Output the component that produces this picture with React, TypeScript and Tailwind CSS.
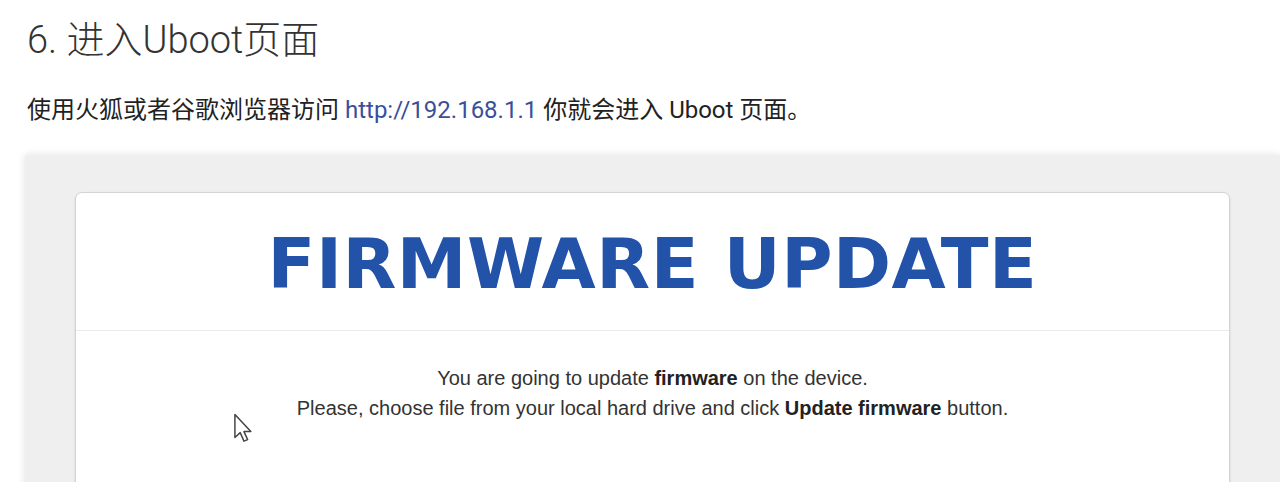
export default function App() {
  return (
    <div className="w-[1280px] h-[482px] overflow-hidden bg-white" style={{ fontFamily: "Roboto, 'Noto Sans CJK SC', sans-serif" }}>
      <div className="pl-[27px] pt-[16px]">
        <h1 className="text-[38px] leading-[48px] font-light text-[#333]">6. 进入Uboot页面</h1>
        <p className="mt-[30px] text-[24px] leading-[32px] text-[#222]">
          使用火狐或者谷歌浏览器访问 <span className="text-[#3a4f9a]">http://192.168.1.1</span> 你就会进入 Uboot 页面。
        </p>
      </div>
      <div className="ml-[25px] mt-[29px] bg-[#efefef] shadow-[0_0_8px_rgba(0,0,0,0.12)] pl-[50px] pr-[50px] pt-[37px] h-[400px]">
        <div className="relative bg-white rounded-[7px] border border-[#d4d4d4] shadow-[0_1px_2px_rgba(0,0,0,0.15)] h-[360px]">
          <div className="h-[138px] flex items-center justify-center border-b border-[#eaeaea]">
            <div className="text-[70px] font-bold text-[#2253a9] tracking-[0.5px] leading-none pt-[4px]" style={{ fontFamily: "'DejaVu Sans', Verdana, sans-serif" }}>
              FIRMWARE UPDATE
            </div>
          </div>
          <div className="pt-[32px] text-center text-[20px] leading-[30px] text-[#333]" style={{ fontFamily: "'Liberation Sans', Arial, sans-serif" }}>
            <div>You are going to update <b className="text-[#222]">firmware</b> on the device.</div>
            <div>Please, choose file from your local hard drive and click <b className="text-[#222]">Update firmware</b> button.</div>
          </div>
          <svg className="absolute left-[157px] top-[220px]" width="24" height="34" viewBox="0 0 22 32">
            <path d="M1.5 1.5 L1.5 23 L6.5 18.5 L10 26.5 L13.5 25 L10 17.5 L16.5 17.5 Z" fill="white" stroke="#444" strokeWidth="1.4" strokeLinejoin="round" />
          </svg>
        </div>
      </div>
    </div>
  );
}
